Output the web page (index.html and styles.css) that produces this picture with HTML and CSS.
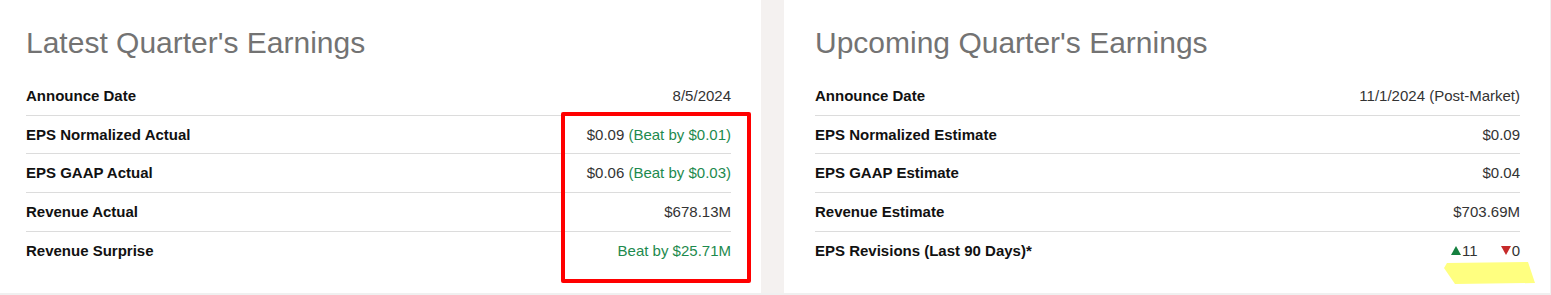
FILE: index.html
```html
<!DOCTYPE html>
<html lang="en">
<head>
<meta charset="utf-8">
<title>Earnings</title>
<link rel="stylesheet" href="styles.css">
</head>
<body>
<div class="page">
  <section class="panel panel-left">
    <h2 class="title">Latest Quarter's Earnings</h2>
    <div class="table">
      <div class="row"><span class="label">Announce Date</span><span class="value">8/5/2024</span></div>
      <div class="row"><span class="label">EPS Normalized Actual</span><span class="value">$0.09 <span class="green">(Beat by $0.01)</span></span></div>
      <div class="row"><span class="label">EPS GAAP Actual</span><span class="value">$0.06 <span class="green">(Beat by $0.03)</span></span></div>
      <div class="row"><span class="label">Revenue Actual</span><span class="value">$678.13M</span></div>
      <div class="row"><span class="label">Revenue Surprise</span><span class="value green">Beat by $25.71M</span></div>
    </div>
    <div class="redbox"></div>
  </section>
  <section class="panel panel-right">
    <h2 class="title">Upcoming Quarter's Earnings</h2>
    <div class="table">
      <div class="row"><span class="label">Announce Date</span><span class="value">11/1/2024 (Post-Market)</span></div>
      <div class="row"><span class="label">EPS Normalized Estimate</span><span class="value">$0.09</span></div>
      <div class="row"><span class="label">EPS GAAP Estimate</span><span class="value">$0.04</span></div>
      <div class="row"><span class="label">Revenue Estimate</span><span class="value">$703.69M</span></div>
      <div class="row"><span class="label">EPS Revisions (Last 90 Days)*</span>
        <span class="value revisions">
          <span class="rev"><svg class="tri" width="10" height="9" viewBox="0 0 10 9"><polygon points="5,0 10,9 0,9" fill="#15803f"/></svg>11</span>
          <span class="rev"><svg class="tri" width="10" height="9" viewBox="0 0 10 9"><polygon points="0,0 10,0 5,9" fill="#c62a2a"/></svg>0</span>
        </span>
      </div>
    </div>
    <svg class="highlight" width="92" height="23" viewBox="0 0 92 23"><polygon points="3,1 84,0 91,21 11,22 0,6" fill="#ffff80"/></svg>
  </section>
</div>
</body>
</html>
```
FILE: styles.css
```css
html, body {
  margin: 0;
  padding: 0;
}
body {
  background: #f0f0f0;
  font-family: "Liberation Sans", Arial, sans-serif;
  width: 1551px;
  height: 295px;
  overflow: hidden;
}
.page {
  display: flex;
  gap: 23px;
  height: 293px;
  background: #f4f1f0;
  width: 1550px;
}
.panel {
  position: relative;
  background: #fff;
  box-sizing: border-box;
  padding-top: 25px;
}
.panel-left {
  width: 761px;
  padding-left: 26px;
  padding-right: 30px;
}
.panel-right {
  width: 766px;
  padding-left: 31px;
  padding-right: 30px;
}
.title {
  margin: 0 0 16px 0;
  font-weight: normal;
  font-size: 30px;
  line-height: 36px;
  color: #737373;
}
.row {
  display: flex;
  justify-content: space-between;
  align-items: center;
  padding: 11px 0 10px;
  line-height: 16.67px;
  border-bottom: 1px solid #dcdcdc;
  font-size: 15px;
}
.row:last-child {
  border-bottom: none;
}
.label {
  font-weight: bold;
  color: #111;
}
.value {
  color: #333;
}
.green {
  color: #1d8a4e;
}
.revisions {
  display: flex;
  gap: 23px;
}
.rev {
  display: inline-flex;
  align-items: center;
  gap: 1px;
}
.tri {
  display: block;
  margin-top: -1px;
}
.redbox {
  position: absolute;
  left: 561px;
  top: 112px;
  width: 190px;
  height: 171px;
  box-sizing: border-box;
  border: 4px solid #ff0000;
  border-radius: 2px;
}
.highlight {
  position: absolute;
  left: 660px;
  top: 262px;
}
```
